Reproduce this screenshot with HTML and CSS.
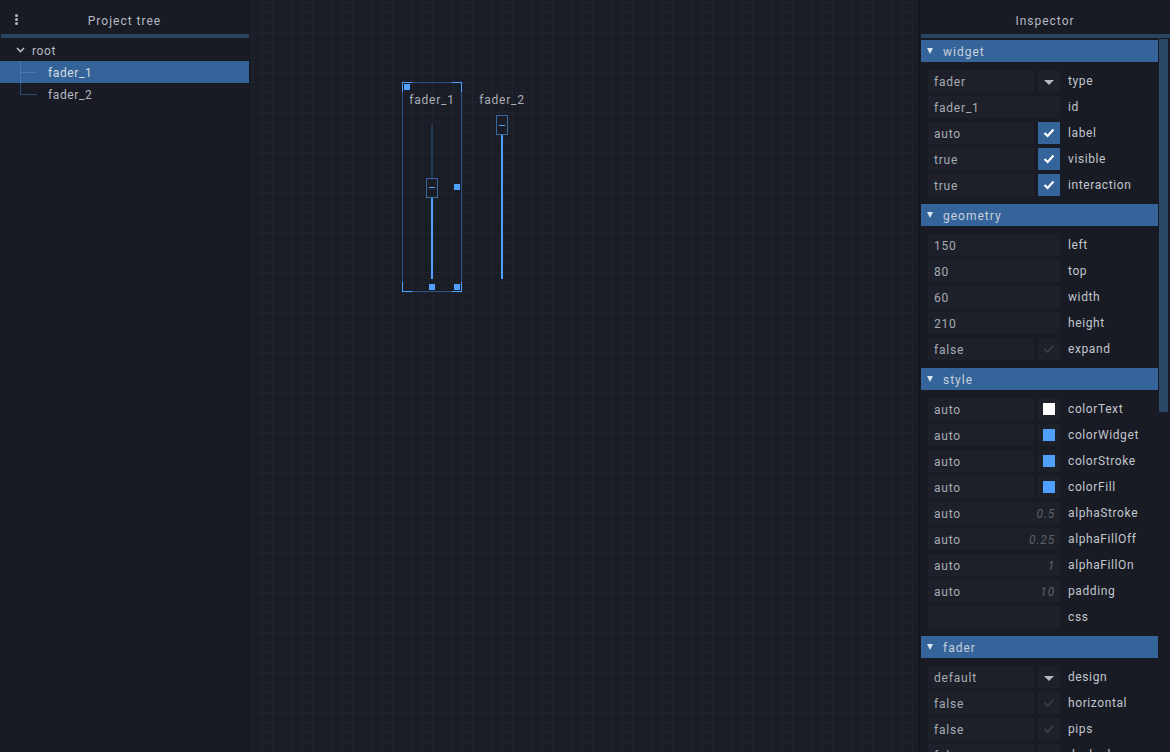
FILE: index.html
```html
<!DOCTYPE html>
<html>
<head>
<meta charset="utf-8">
<title>Editor</title>
<link rel="stylesheet" href="styles.css">
</head>
<body>
<div class="app">
  <aside class="tree-panel">
    <header class="panel-header tree-header">
      <span class="menu-dots"><i></i><i></i><i></i></span>
      <span class="panel-title">Project tree</span>
      <span></span>
    </header>
    <div class="strip"></div>
    <ul class="tree">
      <li class="tree-row root-row">
        <svg class="chev" width="9" height="6" viewBox="0 0 9 6"><path d="M1 1 L4.5 4.5 L8 1" fill="none" stroke="#b9bdc5" stroke-width="1.6"/></svg>
        <span>root</span>
      </li>
      <li class="tree-row child selected"><span class="branch mid"></span><span>fader_1</span></li>
      <li class="tree-row child"><span class="branch last"></span><span>fader_2</span></li>
    </ul>
  </aside>

  <main class="canvas">
    <div class="stage">
      <div class="widget is-selected" style="left:150px;top:80px">
        <div class="w-label">fader_1</div>
        <div class="fader">
          <div class="track">
            <div class="fill" style="height:calc(59.1% - 10px)"></div>
            <div class="knob" style="top:calc(40.9% - 10px)"><span class="dash"></span></div>
          </div>
        </div>
        <span class="corner tl"></span><span class="corner tr"></span><span class="corner bl"></span><span class="corner br"></span>
        <span class="handle h-tl"></span>
        <span class="handle h-r"></span>
        <span class="handle h-b"></span>
        <span class="handle h-br"></span>
      </div>
      <div class="widget" style="left:220px;top:80px">
        <div class="w-label">fader_2</div>
        <div class="fader">
          <div class="track">
            <div class="fill" style="height:calc(100% - 10px)"></div>
            <div class="knob" style="top:-10px"><span class="dash"></span></div>
          </div>
        </div>
      </div>
    </div>
  </main>

  <aside class="inspector">
    <header class="panel-header insp-header"><span class="panel-title">Inspector</span></header>
    <div class="strip"></div>
    <div class="insp-body">
      <div class="insp-content">

        <section class="section">
          <div class="sec-head"><span class="tri"></span><span>widget</span></div>
          <div class="sec-body">
            <div class="row"><div class="field">fader</div><div class="btn"><span class="caret"></span></div><div class="prop">type</div></div>
            <div class="row"><div class="field wide">fader_1</div><div class="prop">id</div></div>
            <div class="row"><div class="field">auto</div><div class="btn on"><svg width="12" height="10" viewBox="0 0 12 10"><path d="M1.5 5 L4.6 8 L10.5 1.5" fill="none" stroke="#ffffff" stroke-width="2.2"/></svg></div><div class="prop">label</div></div>
            <div class="row"><div class="field">true</div><div class="btn on"><svg width="12" height="10" viewBox="0 0 12 10"><path d="M1.5 5 L4.6 8 L10.5 1.5" fill="none" stroke="#ffffff" stroke-width="2.2"/></svg></div><div class="prop">visible</div></div>
            <div class="row"><div class="field">true</div><div class="btn on"><svg width="12" height="10" viewBox="0 0 12 10"><path d="M1.5 5 L4.6 8 L10.5 1.5" fill="none" stroke="#ffffff" stroke-width="2.2"/></svg></div><div class="prop">interaction</div></div>
          </div>
        </section>

        <section class="section">
          <div class="sec-head"><span class="tri"></span><span>geometry</span></div>
          <div class="sec-body">
            <div class="row"><div class="field wide">150</div><div class="prop">left</div></div>
            <div class="row"><div class="field wide">80</div><div class="prop">top</div></div>
            <div class="row"><div class="field wide">60</div><div class="prop">width</div></div>
            <div class="row"><div class="field wide">210</div><div class="prop">height</div></div>
            <div class="row"><div class="field">false</div><div class="btn"><svg width="12" height="10" viewBox="0 0 12 10"><path d="M1.5 5 L4.6 8 L10.5 1.5" fill="none" stroke="#3a3e47" stroke-width="1.8"/></svg></div><div class="prop">expand</div></div>
          </div>
        </section>

        <section class="section">
          <div class="sec-head"><span class="tri"></span><span>style</span></div>
          <div class="sec-body">
            <div class="row"><div class="field">auto</div><div class="btn"><span class="swatch white"></span></div><div class="prop">colorText</div></div>
            <div class="row"><div class="field">auto</div><div class="btn"><span class="swatch"></span></div><div class="prop">colorWidget</div></div>
            <div class="row"><div class="field">auto</div><div class="btn"><span class="swatch"></span></div><div class="prop">colorStroke</div></div>
            <div class="row"><div class="field">auto</div><div class="btn"><span class="swatch"></span></div><div class="prop">colorFill</div></div>
            <div class="row"><div class="field wide"><span>auto</span><span class="ph">0.5</span></div><div class="prop">alphaStroke</div></div>
            <div class="row"><div class="field wide"><span>auto</span><span class="ph">0.25</span></div><div class="prop">alphaFillOff</div></div>
            <div class="row"><div class="field wide"><span>auto</span><span class="ph">1</span></div><div class="prop">alphaFillOn</div></div>
            <div class="row"><div class="field wide"><span>auto</span><span class="ph">10</span></div><div class="prop">padding</div></div>
            <div class="row"><div class="field wide"></div><div class="prop">css</div></div>
          </div>
        </section>

        <section class="section">
          <div class="sec-head"><span class="tri"></span><span>fader</span></div>
          <div class="sec-body">
            <div class="row"><div class="field">default</div><div class="btn"><span class="caret"></span></div><div class="prop">design</div></div>
            <div class="row"><div class="field">false</div><div class="btn"><svg width="12" height="10" viewBox="0 0 12 10"><path d="M1.5 5 L4.6 8 L10.5 1.5" fill="none" stroke="#3a3e47" stroke-width="1.8"/></svg></div><div class="prop">horizontal</div></div>
            <div class="row"><div class="field">false</div><div class="btn"><svg width="12" height="10" viewBox="0 0 12 10"><path d="M1.5 5 L4.6 8 L10.5 1.5" fill="none" stroke="#3a3e47" stroke-width="1.8"/></svg></div><div class="prop">pips</div></div>
            <div class="row"><div class="field">false</div><div class="btn"><svg width="12" height="10" viewBox="0 0 12 10"><path d="M1.5 5 L4.6 8 L10.5 1.5" fill="none" stroke="#3a3e47" stroke-width="1.8"/></svg></div><div class="prop">dashed</div></div>
            <div class="row"><div class="field">false</div><div class="btn"><svg width="12" height="10" viewBox="0 0 12 10"><path d="M1.5 5 L4.6 8 L10.5 1.5" fill="none" stroke="#3a3e47" stroke-width="1.8"/></svg></div><div class="prop">gradient</div></div>
          </div>
        </section>

      </div>
      <div class="scrollbar"><div class="thumb"></div></div>
    </div>
  </aside>
</div>
</body>
</html>
```

FILE: styles.css
```css
* { box-sizing: border-box; margin: 0; padding: 0; }

body {
  background: #181b24;
  font-family: Roboto, "Liberation Sans", sans-serif;
  font-size: 12px;
  color: #b9bdc5;
  letter-spacing: 0.6px;
}

.app {
  display: flex;
  height: 752px;
  overflow: hidden;
}

/* ---------- panels ---------- */
.panel-header {
  height: 34px;
  padding-top: 7px;
  align-items: center;
}
.panel-title {
  color: #b5b9c1;
  font-size: 12px;
  letter-spacing: 1px;
  text-align: center;
}
.strip {
  height: 4px;
  background: #2a4562;
  margin-left: 1px;
}

/* ---------- project tree ---------- */
.tree-panel {
  width: 250px;
  flex: none;
  background: #181b24;
  border-right: 1px solid #14161d;
  display: flex;
  flex-direction: column;
}
.tree-header {
  display: grid;
  grid-template-columns: 33px 1fr 33px;
}
.menu-dots {
  justify-self: center;
  display: flex;
  flex-direction: column;
  gap: 1px;
  margin-top: -2px;
}
.menu-dots i {
  display: block;
  width: 3px;
  height: 3px;
  border-radius: 50%;
  background: #b5b9c1;
}
.tree {
  list-style: none;
  padding-top: 1px;
}
.tree-row {
  height: 22px;
  display: flex;
  align-items: center;
  color: #b4b8c0;
}
.tree-row span:last-child {
  padding-top: 1px;
}
.root-row {
  padding-left: 16px;
}
.root-row .chev {
  margin-right: 7px;
}
.child .branch {
  width: 17px;
  height: 22px;
  margin-left: 20px;
  margin-right: 11px;
  padding: 0;
}
.branch.mid {
  background:
    linear-gradient(#2b4b70, #2b4b70) 0 0 / 1px 100% no-repeat,
    linear-gradient(#2b4b70, #2b4b70) 0 11px / 17px 1px no-repeat;
}
.branch.last {
  background:
    linear-gradient(#2b4b70, #2b4b70) 0 0 / 1px 12px no-repeat,
    linear-gradient(#2b4b70, #2b4b70) 0 11px / 17px 1px no-repeat;
}
.tree-row.selected {
  background: #34639a;
  color: #d5dbe4;
}
.tree-row.selected .branch.mid {
  background:
    linear-gradient(#4777ad, #4777ad) 0 0 / 1px 100% no-repeat,
    linear-gradient(#4777ad, #4777ad) 0 11px / 17px 1px no-repeat;
}

/* ---------- canvas ---------- */
.canvas {
  flex: 1;
  min-width: 0;
  background-color: #1a1d26;
  background-image:
    linear-gradient(to right, #1f232d 1px, transparent 1px),
    linear-gradient(to bottom, #1f232d 1px, transparent 1px);
  background-size: 10px 10px;
  background-position: 2px 2px;
  overflow: hidden;
}
.stage {
  position: relative;
  margin: 2px;
  height: 100%;
}
.widget {
  position: absolute;
  width: 60px;
  height: 210px;
  display: flex;
  flex-direction: column;
}
.widget.is-selected {
  border: 1px solid #2a5381;
}
.w-label {
  height: 34px;
  line-height: 36px;
  text-align: center;
  color: #a9adb5;
  font-size: 12px;
  letter-spacing: 0.8px;
  flex: none;
}
.widget.is-selected .w-label {
  height: 33px;
  line-height: 34px;
}
.fader {
  flex: 1;
  padding: 9px 0 13px;
}
.widget.is-selected .fader {
  padding: 9px 0 12px;
}
.track {
  position: relative;
  width: 2px;
  height: 100%;
  margin: 0 auto;
  background: #213b59;
}
.widget.is-selected .track {
  margin-left: 28px;
}
.fill {
  position: absolute;
  left: 0;
  bottom: 0;
  width: 2px;
  background: #4ea1ff;
}
.knob {
  position: absolute;
  left: -5px;
  width: 12px;
  height: 20px;
  border: 1px solid #3a6aa1;
  background: #1a1d26;
  display: flex;
  align-items: center;
  justify-content: center;
}
.dash {
  width: 6px;
  height: 1px;
  background: #4ea1ff;
}

.corner {
  position: absolute;
  width: 10px;
  height: 10px;
  border: 0 solid #4ea1ff;
}
.corner.tl { left: -1px; top: -1px; border-left-width: 1px; border-top-width: 1px; }
.corner.tr { right: -1px; top: -1px; border-right-width: 1px; border-top-width: 1px; }
.corner.bl { left: -1px; bottom: -1px; border-left-width: 1px; border-bottom-width: 1px; }
.corner.br { right: -1px; bottom: -1px; border-right-width: 1px; border-bottom-width: 1px; }

.handle {
  position: absolute;
  width: 6px;
  height: 6px;
  background: #4ea1ff;
}
.h-tl { left: 1px; top: 1px; }
.h-r  { left: 51px; top: 101px; }
.h-b  { left: 26px; top: 201px; }
.h-br { left: 51px; top: 201px; }

/* ---------- inspector ---------- */
.inspector {
  width: 252px;
  flex: none;
  background: #181b24;
  border-left: 2px solid #13161d;
  display: flex;
  flex-direction: column;
}
.insp-header {
  display: flex;
  justify-content: center;
}
.insp-body {
  flex: 1;
  min-height: 0;
  display: flex;
  overflow: hidden;
}
.insp-content {
  width: 238px;
  flex: none;
  padding: 2px 0 0 1px;
}
.scrollbar {
  flex: 1;
  padding: 1px 0 0 1px;
}
.thumb {
  width: 9px;
  height: 373px;
  background: #2a4767;
}

.sec-head {
  height: 22px;
  background: #34649a;
  display: flex;
  align-items: center;
  padding-left: 6px;
  color: #c9d0da;
  letter-spacing: 1px;
}
.sec-head span:last-child {
  padding-top: 1px;
}
.tri {
  width: 0;
  height: 0;
  border-left: 3.5px solid transparent;
  border-right: 3.5px solid transparent;
  border-top: 6px solid #dde3ea;
  margin-right: 10px;
}
.sec-body {
  padding: 8px 0 8px 7px;
  display: flex;
  flex-direction: column;
  gap: 4px;
}
.row {
  height: 22px;
  display: flex;
  align-items: center;
  gap: 4px;
}
.field {
  width: 106px;
  height: 22px;
  background: #1d2029;
  padding: 1px 5px 0 6px;
  display: flex;
  align-items: center;
  justify-content: space-between;
  color: #a7abb3;
  letter-spacing: 0.8px;
  white-space: nowrap;
}
.field.wide { width: 132px; }
.ph {
  font-style: italic;
  color: #5c6068;
}
.btn {
  width: 22px;
  height: 22px;
  background: #1d2029;
  display: flex;
  align-items: center;
  justify-content: center;
  flex: none;
}
.btn.on { background: #34649a; }
.caret {
  width: 0;
  height: 0;
  border-left: 5px solid transparent;
  border-right: 5px solid transparent;
  border-top: 5px solid #b3b7bf;
  margin-top: 2px;
}
.swatch {
  width: 12px;
  height: 12px;
  background: #4ea1ff;
}
.swatch.white { background: #ffffff; }
.prop {
  margin-left: 4px;
  color: #c2c6cd;
  white-space: nowrap;
}
```
